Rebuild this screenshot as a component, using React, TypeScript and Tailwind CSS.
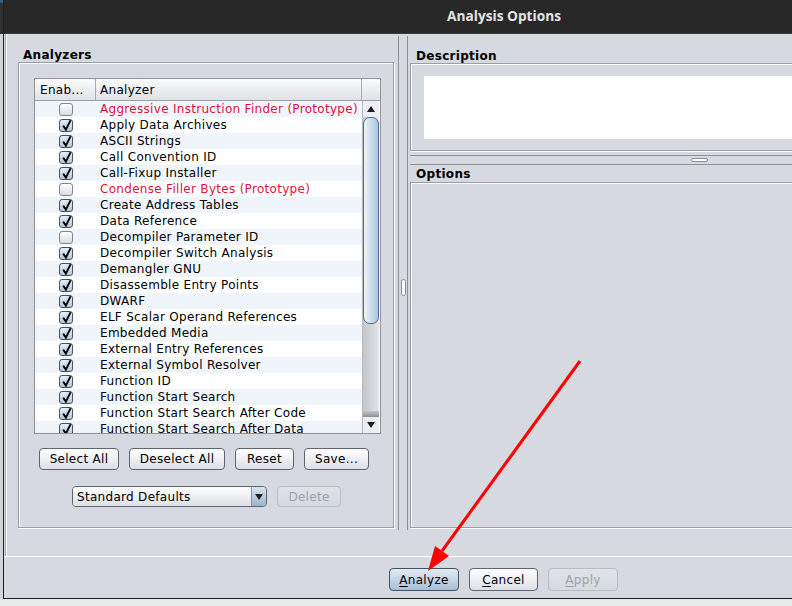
import React from "react";

type Row = { name: string; on: boolean; proto?: boolean };

const analyzers: Row[] = [
  { name: "Aggressive Instruction Finder (Prototype)", on: false, proto: true },
  { name: "Apply Data Archives", on: true },
  { name: "ASCII Strings", on: true },
  { name: "Call Convention ID", on: true },
  { name: "Call-Fixup Installer", on: true },
  { name: "Condense Filler Bytes (Prototype)", on: false, proto: true },
  { name: "Create Address Tables", on: true },
  { name: "Data Reference", on: true },
  { name: "Decompiler Parameter ID", on: false },
  { name: "Decompiler Switch Analysis", on: true },
  { name: "Demangler GNU", on: true },
  { name: "Disassemble Entry Points", on: true },
  { name: "DWARF", on: true },
  { name: "ELF Scalar Operand References", on: true },
  { name: "Embedded Media", on: true },
  { name: "External Entry References", on: true },
  { name: "External Symbol Resolver", on: true },
  { name: "Function ID", on: true },
  { name: "Function Start Search", on: true },
  { name: "Function Start Search After Code", on: true },
  { name: "Function Start Search After Data", on: true },
];

function CheckBox({ on }: { on: boolean }) {
  if (!on) {
    return (
      <span className="block w-[14px] h-[13px] rounded-[3px] border border-[#80868f] bg-linear-to-b from-[#fdfdfe] to-[#d8dbe0]" />
    );
  }
  return (
    <span className="relative block w-[14px] h-[13px] rounded-[3px] border border-[#4b5262] bg-linear-to-b from-[#e6edf5] to-[#b6c7d8]">
      <svg className="absolute left-[1px] top-[-1px]" width="12" height="13" viewBox="0 0 12 13">
        <path d="M2.2 6.6 L4.9 10.6 L9.6 1.2" fill="none" stroke="#000" strokeWidth="1.9" strokeLinejoin="miter" />
      </svg>
    </span>
  );
}

function Button({ children, w, kind = "normal" }: { children: React.ReactNode; w: string; kind?: "normal" | "default" | "disabled" }) {
  const base = "flex items-center justify-center rounded-[4px] border text-[12px] leading-none shrink-0";
  const look =
    kind === "default"
      ? "border-[#3f5366] bg-linear-to-b from-[#e3ebf3] to-[#a9bfd5] text-black"
      : kind === "disabled"
      ? "border-[#b9bdc4] bg-linear-to-b from-[#dfe2e6] to-[#d6d9df] text-[#9ea3ab]"
      : "border-[#5f6570] bg-linear-to-b from-[#ffffff] to-[#dcdfe4] text-black";
  return <div className={`${base} ${look} ${w}`}>{children}</div>;
}

export default function App() {
  return (
    <div className="relative w-[792px] h-[606px] overflow-hidden bg-[#e7e8e9] font-['DejaVu_Sans',sans-serif] text-[12px] tracking-[0.3px] text-black">
      <div className="flex h-[599px]">
        {/* window edge on the left */}
        <div className="w-[3px] flex flex-col">
          <div className="h-[3px] bg-[#2e5f86]" />
          <div className="h-[31px] bg-[#303030]" />
          <div className="flex-1 bg-[#d2d4d8]" />
        </div>

        <div className="w-[789px] flex flex-col border-l border-b border-[#1f1f1f] bg-[#d6d9df]">
          {/* title bar */}
          <div className="h-[34px] shrink-0 bg-[#282828] flex items-center pl-[443px] border-b border-[#3a3a3a]">
            <span className="font-['Open_Sans',sans-serif] font-bold text-[13.7px] tracking-normal text-[#e4e4e4]">Analysis Options</span>
          </div>

          {/* main split area */}
          <div className="h-[522px] shrink-0 pl-[1px]">
            <div className="h-full border-l border-[#a2a5aa] shadow-[inset_1px_0_0_#fff] pt-[2px]">
              <div className="h-[494px] flex">
                {/* left: analyzers */}
                <div className="w-[390px] shrink-0 pt-[13px]">
                  <div className="h-[13px] leading-[13px] pl-[17px] font-bold text-[12px]">Analyzers</div>
                  <div className="ml-[12px] w-[376px] h-[466px] border border-[#9a9da3] shadow-[inset_1px_1px_0_#fff,1px_1px_0_#fff] pl-[15px] pt-[15px]">
                    {/* table */}
                    <div className="w-[347px] h-[356px] border border-[#8e9299] bg-white flex flex-col overflow-hidden">
                      <div className="h-[22px] shrink-0 flex border-b border-[#9ca0a7] bg-linear-to-b from-[#fbfbfc] to-[#dfe1e5]">
                        <div className="w-[61px] border-r border-[#a9adb3] pl-[5px] flex items-center">Enab...</div>
                        <div className="w-[266px] border-r border-[#a9adb3] pl-[4px] flex items-center">Analyzer</div>
                        <div className="flex-1" />
                      </div>
                      <div className="flex-1 flex overflow-hidden">
                        <div className="w-[327px] overflow-hidden">
                          {analyzers.map((r, i) => (
                            <div key={r.name} className={`h-[16px] flex items-center ${i % 2 === 0 ? "bg-[#f0f5fc]" : "bg-white"}`}>
                              <div className="w-[61px] flex justify-center pl-[1px]">
                                <CheckBox on={r.on} />
                              </div>
                              <div className={`pl-[4px] whitespace-nowrap leading-[16px] ${r.proto ? "text-[#dc143c]" : "text-black"}`}>{r.name}</div>
                            </div>
                          ))}
                        </div>
                        {/* scrollbar */}
                        <div className="w-[17px] flex flex-col bg-linear-to-r from-[#c3c5c9] to-[#e3e4e7] border-l border-[#b5b8bd]">
                          <div className="h-[16px] shrink-0 bg-[#eceef1] flex items-center justify-center">
                            <svg width="8" height="6" viewBox="0 0 8 6"><path d="M4 0 L8 6 L0 6 Z" fill="#1d1d1d" /></svg>
                          </div>
                          <div className="h-[207px] shrink-0 rounded-[7px] border border-[#4f6e91] bg-linear-to-r from-[#eef4fa] to-[#aec6dc]" />
                          <div className="flex-1" />
                          <div className="h-[6px] bg-linear-to-b from-[#c3c5c9] to-[#8e9196]" />
                          <div className="h-[16px] shrink-0 bg-[#eceef1] flex items-center justify-center">
                            <svg width="8" height="6" viewBox="0 0 8 6"><path d="M0 0 L8 0 L4 6 Z" fill="#1d1d1d" /></svg>
                          </div>
                        </div>
                      </div>
                    </div>

                    <div className="mt-[14px] ml-[5px] flex gap-[10px]">
                      <Button w="w-[80px] h-[22px]">Select All</Button>
                      <Button w="w-[96px] h-[22px]">Deselect All</Button>
                      <Button w="w-[59px] h-[22px]">Reset</Button>
                      <Button w="w-[65px] h-[22px]">Save...</Button>
                    </div>

                    <div className="mt-[16px] ml-[38px] flex gap-[10px]">
                      <div className="w-[195px] h-[21px] flex rounded-[4px] border border-[#5f6570] overflow-hidden">
                        <div className="flex-1 bg-linear-to-b from-[#ffffff] to-[#dcdfe4] pl-[4px] flex items-center">Standard Defaults</div>
                        <div className="w-[15px] border-l border-[#8193a6] bg-linear-to-b from-[#d9e4ef] to-[#9db5cc] flex items-center justify-center">
                          <svg width="8" height="6" viewBox="0 0 8 6"><path d="M0 0 L8 0 L4 6 Z" fill="#1d1d1d" /></svg>
                        </div>
                      </div>
                      <Button w="w-[64px] h-[21px]" kind="disabled">Delete</Button>
                    </div>
                  </div>
                </div>

                {/* vertical divider */}
                <div className="w-[14px] shrink-0 pl-[2px]">
                  <div className="w-[10px] h-full border-x border-[#8e9196] flex justify-center pt-[243px]">
                    <div className="w-[5px] h-[17px] rounded-[3px] border border-[#8a8d92] bg-white" />
                  </div>
                </div>

                {/* right: description + options */}
                <div className="w-[400px] shrink-0 pt-[13px]">
                  <div className="h-[14px] leading-[14px] pl-[6px] font-bold text-[12px]">Description</div>
                  <div className="h-[88px] border border-[#9a9da3] shadow-[inset_1px_1px_0_#fff,1px_1px_0_#fff] pl-[13px] pt-[12px]">
                    <div className="h-[63px] bg-white" />
                  </div>
                  <div className="mt-[4px] h-[10px] border-y border-[#8e9196] flex items-center pl-[281px]">
                    <div className="w-[17px] h-[4px] rounded-[3px] border border-[#8a8d92] bg-white" />
                  </div>
                  <div className="h-[17px] leading-[15px] pt-[2px] pl-[6px] font-bold text-[12px]">Options</div>
                  <div className="h-[346px] border border-[#9a9da3] shadow-[inset_1px_1px_0_#fff,1px_1px_0_#fff]" />
                </div>
              </div>
            </div>
          </div>

          {/* bottom buttons */}
          <div className="flex-1 border-t border-white pt-[11px] pl-[385px] flex items-start gap-[10px]">
            <Button w="w-[70px] h-[23px]" kind="default"><span className="underline underline-offset-2">A</span>nalyze</Button>
            <Button w="w-[69px] h-[23px]"><span className="underline underline-offset-2">C</span>ancel</Button>
            <Button w="w-[70px] h-[23px]" kind="disabled"><span className="underline underline-offset-2">A</span>pply</Button>
          </div>
        </div>
      </div>

      {/* red annotation arrow */}
      <svg className="absolute left-0 top-0 pointer-events-none" width="792" height="606">
        <line x1="580" y1="361" x2="442" y2="551" stroke="#ff0000" strokeWidth="3" />
        <polygon points="428,571 435,546 449,556" fill="#ff0000" />
      </svg>
    </div>
  );
}
